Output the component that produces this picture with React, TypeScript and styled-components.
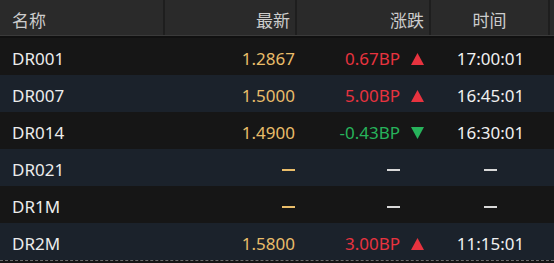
import * as React from 'react';
import styled, { createGlobalStyle } from 'styled-components';

const GlobalStyle = createGlobalStyle`
  html, body {
    margin: 0;
    padding: 0;
    background: #151515;
  }
  body {
    font-family: "Noto Sans", "Noto Sans CJK SC", sans-serif;
  }
`;

const COLS = '165px 132px 134px 119px 4px';

const Table = styled.div`
  width: 554px;
  height: 263px;
  background: #151515;
  overflow: hidden;
`;

const HeaderRow = styled.div`
  display: grid;
  grid-template-columns: ${COLS};
  box-sizing: border-box;
  height: 36px;
  padding-top: 3px;
  background: #2a2a2a;
  border-bottom: 1px solid #3a3a3a;
  box-shadow: 0 2px 0 #101010;
  margin-bottom: 2px;
`;

const HeadCell = styled.div<{ $align: 'left' | 'right' | 'center' }>`
  display: flex;
  align-items: center;
  justify-content: ${p => (p.$align === 'left' ? 'flex-start' : p.$align === 'right' ? 'flex-end' : 'center')};
  padding: 0 ${p => (p.$align === 'right' ? '5px' : '0')} 0 ${p => (p.$align === 'left' ? '12px' : '0')};
  margin-top: -3px;
  padding-top: 3px;
  font-size: 17px;
  color: #cccccc;
  border-right: 2px solid #1e1e1e;
`;

const Row = styled.div<{ $alt: boolean }>`
  display: grid;
  grid-template-columns: ${COLS};
  box-sizing: border-box;
  height: 37px;
  padding-top: 4px;
  background: ${p => (p.$alt ? '#1b222b' : '#161616')};
  font-size: 17px;
`;

const LastRule = styled.div`
  height: 0;
  border-top: 1px dashed #6a6a6a;
`;

const NameCell = styled.div`
  display: flex;
  align-items: center;
  padding-left: 12px;
  color: #ececec;
`;

const PriceCell = styled.div`
  display: flex;
  align-items: center;
  justify-content: flex-end;
  padding-right: 2px;
  color: #e9bd6a;
`;

const ChangeCell = styled.div<{ $tone: 'up' | 'down' | 'flat' }>`
  display: flex;
  align-items: center;
  justify-content: flex-end;
  gap: 11px;
  padding-right: ${p => (p.$tone === 'flat' ? '31px' : '7px')};
  color: ${p => (p.$tone === 'up' ? '#e8333f' : p.$tone === 'down' ? '#27b35b' : '#d8d8d8')};
`;

const TimeCell = styled.div`
  display: flex;
  align-items: center;
  justify-content: center;
  color: #f0f0f0;
`;

const Dash = styled.span<{ $color: string }>`
  display: inline-block;
  width: 13px;
  height: 2px;
  background: ${p => p.$color};
`;

const Arrow = ({ up }: { up: boolean }) => (
  <svg width="13" height="12" viewBox="0 0 13 12">
    {up ? (
      <polygon points="6.5,0 13,12 0,12" fill="#e8333f" />
    ) : (
      <polygon points="0,0 13,0 6.5,12" fill="#27b35b" />
    )}
  </svg>
);

type Quote = {
  name: string;
  price?: string;
  change?: string;
  tone: 'up' | 'down' | 'flat';
  time?: string;
};

const quotes: Quote[] = [
  { name: 'DR001', price: '1.2867', change: '0.67BP', tone: 'up', time: '17:00:01' },
  { name: 'DR007', price: '1.5000', change: '5.00BP', tone: 'up', time: '16:45:01' },
  { name: 'DR014', price: '1.4900', change: '-0.43BP', tone: 'down', time: '16:30:01' },
  { name: 'DR021', tone: 'flat' },
  { name: 'DR1M', tone: 'flat' },
  { name: 'DR2M', price: '1.5800', change: '3.00BP', tone: 'up', time: '11:15:01' },
];

export default function App() {
  return (
    <>
      <GlobalStyle />
      <Table>
        <HeaderRow>
          <HeadCell $align="left">名称</HeadCell>
          <HeadCell $align="right">最新</HeadCell>
          <HeadCell $align="right">涨跌</HeadCell>
          <HeadCell $align="center">时间</HeadCell>
          <div />
        </HeaderRow>
        {quotes.map((q, i) => (
          <Row key={q.name} $alt={i % 2 === 1}>
            <NameCell>{q.name}</NameCell>
            <PriceCell>{q.price ?? <Dash $color="#e9bd6a" />}</PriceCell>
            <ChangeCell $tone={q.tone}>
              {q.change ? (
                <>
                  <span>{q.change}</span>
                  <Arrow up={q.tone === 'up'} />
                </>
              ) : (
                <Dash $color="#d8d8d8" />
              )}
            </ChangeCell>
            <TimeCell>{q.time ?? <Dash $color="#d8d8d8" />}</TimeCell>
            <div />
          </Row>
        ))}
        <LastRule />
      </Table>
    </>
  );
}
